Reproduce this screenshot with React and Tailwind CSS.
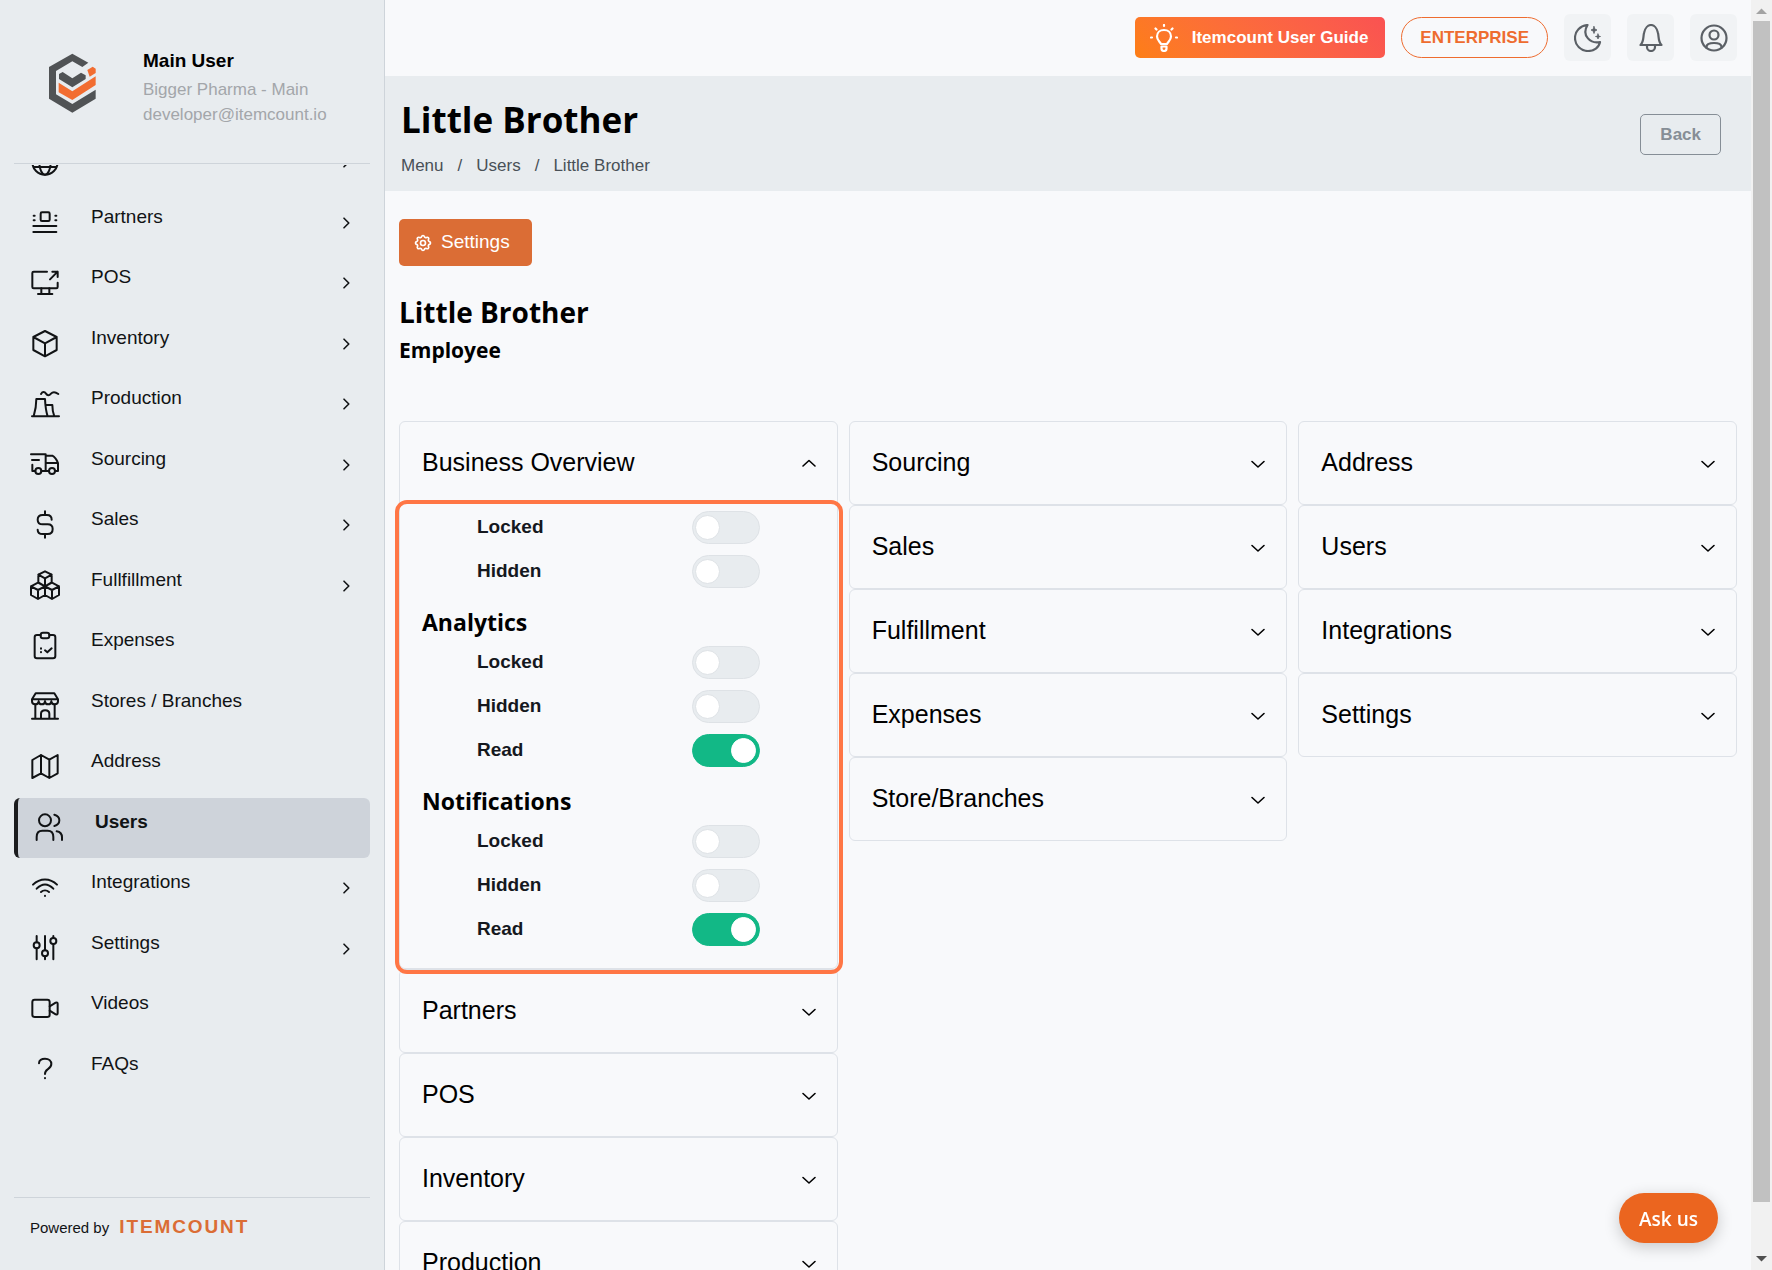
import { useState } from "react";
import { TbSettings } from "react-icons/tb";

/* ---------- icons ---------- */

const glyphs = {
  globe: (
    <>
      <circle cx="48" cy="48" r="38" />
      <ellipse cx="48" cy="48" rx="17" ry="38" />
      <path d="M14 33H82M14 63H82" />
    </>
  ),
  partners: (
    <>
      <rect x="35" y="16" width="27" height="26" rx="4" />
      <path d="M14 26H17M14 40H17M79 26H82M79 40H82M13 57H82M13 75H82" />
    </>
  ),
  pos: (
    <>
      <path d="M54 14H14Q10 14 10 18V60Q10 64 14 64H82Q86 64 86 60V47" />
      <path d="M63 37L86 14M70 14H86V30M37 64V81M61 64V81M27 81H70" />
    </>
  ),
  inventory: <path d="M48 9L13 27V66L48 85L83 66V27ZM13 27L48 46L83 27M48 46V85" />,
  production: (
    <>
      <path d="M9 85H90M14 85C19 68 22 52 22 33H48C49 55 51 70 56 85M51 51H70C70 64 72 75 76 85" />
      <path d="M36 18C41 10 47 11 51 17S60 24 66 17S80 12 88 18" />
    </>
  ),
  sourcing: (
    <>
      <path d="M6 16H50V66M9 33H30M10 47V66H19M37 66H60M50 20H70C78 24 83 32 87 42V66H79M50 42H87" />
      <circle cx="28" cy="66" r="9" />
      <circle cx="69" cy="66" r="9" />
    </>
  ),
  sales: (
    <path d="M48 7V18M48 75V86M68 32C68 23 63 18 54 18H41C31 18 26 24 26 32C26 41 32 46 41 46H56C66 46 71 52 71 60C71 69 66 75 56 75H41C31 75 26 69 26 62" />
  ),
  fulfillment: (
    <path d="M48 4L28 14V37L48 49L68 37V14ZM28 14L48 25L68 14M48 25V49M27 38L6 49V75L27 87L48 75V49ZM6 49L27 60L48 49M27 60V87M69 38L48 49V75L69 87L90 75V49ZM48 49L69 60L90 49M69 60V87" />
  ),
  expenses: (
    <>
      <path d="M35 15H24Q17 15 17 22V78Q17 85 24 85H72Q79 85 79 78V22Q79 15 72 15H61" />
      <rect x="35" y="8" width="26" height="17" rx="7" />
      <path d="M36 55V56M36 66V67M48 61L55 67L68 55" />
    </>
  ),
  stores: (
    <>
      <path d="M20 7H76L87 25V31C87 43 68 43 67 31C66 43 49 43 48 31C47 43 30 43 29 31C28 43 9 43 9 31V25ZM9 25H87" />
      <path d="M19 41V83M77 41V83M9 83H87M36 83V68C36 54 61 54 61 68V83" />
    </>
  ),
  address: <path d="M10 27L36 12L61 26L86 12V67L61 81L36 67L10 81ZM36 12V67M61 26V81" />,
  users: (
    <>
      <circle cx="36" cy="25" r="18" />
      <path d="M64 8C84 13 84 37 64 42M11 84V75C11 62 18 56 28 56H44C56 56 61 63 61 75V84M71 58C82 60 87 66 87 76V84" />
    </>
  ),
  integrations: (
    <path d="M12 38C33 17 63 17 84 38M23 50C39 33 57 33 73 50M36 60C43 54 53 54 60 60M48 71V72" />
  ),
  settings: (
    <>
      <path d="M23 9V28M23 46V79M48 9V52M48 70V79M73 9V15M73 33V79" />
      <circle cx="23" cy="37" r="9" />
      <circle cx="48" cy="61" r="9" />
      <circle cx="73" cy="24" r="9" />
    </>
  ),
  videos: (
    <>
      <rect x="10" y="20" width="52" height="52" rx="7" />
      <path d="M62 40L80 29Q86 27 86 32V61Q86 66 80 64L62 53" />
    </>
  ),
  faqs: <path d="M30 28C30 19 38 14 48 14C60 14 67 21 67 30C67 38 62 42 56 46C50 50 48 54 48 60M48 72V73" />,
};

function NavIcon({ name }) {
  return (
    <svg
      viewBox="0 0 96 96"
      className="size-8 shrink-0"
      fill="none"
      stroke="currentColor"
      strokeWidth="6"
      strokeLinecap="round"
      strokeLinejoin="round"
      aria-hidden="true"
    >
      {glyphs[name]}
    </svg>
  );
}

function LineIcon({ children, className }) {
  return (
    <svg
      viewBox="0 0 28 28"
      className={className}
      fill="none"
      stroke="currentColor"
      strokeWidth="2.2"
      strokeLinecap="round"
      strokeLinejoin="round"
      aria-hidden="true"
    >
      {children}
    </svg>
  );
}

function Logo() {
  return (
    <svg viewBox="140 155 150 186" className="mt-0.5 h-[62px] w-[50px] shrink-0" aria-hidden="true">
      <path
        fill="#505355"
        d="M216 160L264 187L246 200L216 183L167 212V282L216 311L286 268V295L216 337L146 295V200Z"
      />
      <path fill="#505355" d="M176 221L187 215L216 234L242 217L256 225V236L216 261L176 236Z" />
      <path fill="#f26d31" d="M175 247L216 273L286 228V254L216 299L175 276Z" />
      <path fill="#f26d31" d="M261 209L277 199L286 205V218L268 229Z" />
    </svg>
  );
}

function ChevronRight() {
  return (
    <svg viewBox="0 0 8 14" className="h-3.5 w-2" fill="none" stroke="currentColor" strokeWidth="1.6" aria-hidden="true">
      <path d="M2 2.200L6.800 7L2 11.800" strokeLinecap="round" strokeLinejoin="round" />
    </svg>
  );
}

function ChevronDown({ open }) {
  return (
    <svg
      viewBox="0 0 16 10"
      className={open ? "h-2.5 w-4" : "mt-0.5 h-2.5 w-4"}
      fill="none"
      stroke="currentColor"
      strokeWidth="1.6"
      aria-hidden="true"
    >
      <path d={open ? "M2 8L8 2.500L14 8" : "M2 2.500L8 8L14 2.500"} strokeLinecap="round" strokeLinejoin="round" />
    </svg>
  );
}

/* ---------- sidebar ---------- */

const navItems = [
  { label: "", icon: "globe", more: true },
  { label: "Partners", icon: "partners", more: true },
  { label: "POS", icon: "pos", more: true },
  { label: "Inventory", icon: "inventory", more: true },
  { label: "Production", icon: "production", more: true },
  { label: "Sourcing", icon: "sourcing", more: true },
  { label: "Sales", icon: "sales", more: true },
  { label: "Fullfillment", icon: "fulfillment", more: true },
  { label: "Expenses", icon: "expenses" },
  { label: "Stores / Branches", icon: "stores" },
  { label: "Address", icon: "address" },
  { label: "Users", icon: "users", active: true },
  { label: "Integrations", icon: "integrations", more: true },
  { label: "Settings", icon: "settings", more: true },
  { label: "Videos", icon: "videos" },
  { label: "FAQs", icon: "faqs" },
];

function NavItem({ item }) {
  const base = "flex items-center rounded-md pl-[15px] pr-5 text-[#111315] ";
  const look = item.active ? "border-l-4 border-[#1b1c1e] bg-[#ced3da] font-bold" : "";
  return (
    <li className="flex flex-col">
      <a
        href="#"
        className={base + "flex-1 " + look}
        aria-label={item.label || "Overview"}
        aria-current={item.active ? "page" : undefined}
      >
        <NavIcon name={item.icon} />
        <span className="ml-[30px] flex-1 pb-3 text-[19px] leading-6">{item.label}</span>
        {item.more && <ChevronRight />}
      </a>
    </li>
  );
}

function Sidebar() {
  return (
    <aside className="flex w-[385px] shrink-0 flex-col border-r border-[#ced4da] bg-[#e8ecef] px-3.5">
      <header className="flex h-[164px] shrink-0 items-center border-b border-[#ced4da] pl-[33px]">
        <Logo />
        <div className="ml-[46px] pt-2.5">
          <p className="mb-0.5 text-[19px] leading-7 font-bold text-black">Main User</p>
          <p className="text-[17px] leading-[25px] text-[#a3a6aa]">Bigger Pharma - Main</p>
          <p className="text-[17px] leading-[25px] text-[#a3a6aa]">developer@itemcount.io</p>
        </div>
      </header>
      <nav className="mt-px min-h-0 flex-1 overflow-hidden" aria-label="Main">
        <ul className="-mt-[33px] grid min-h-[968px] auto-rows-fr">
          {navItems.map((item) => (
            <NavItem key={item.icon} item={item} />
          ))}
        </ul>
      </nav>
      <footer className="flex h-[73px] shrink-0 items-baseline gap-2.5 border-t border-[#ced4da] pt-[15px] pl-4">
        <span className="text-[15px] leading-7 text-[#111315]">Powered by</span>
        <span className="text-[19px] leading-7 font-bold tracking-widest text-[#db6d35]">ITEMCOUNT</span>
      </footer>
    </aside>
  );
}

/* ---------- main area ---------- */

function IconButton({ label, children }) {
  return (
    <button
      type="button"
      aria-label={label}
      className="flex size-[47px] items-center justify-center rounded-md bg-[#f1f3f5] text-[#5b6066]"
    >
      <LineIcon className="size-7">{children}</LineIcon>
    </button>
  );
}

function TopBar() {
  return (
    <div className="flex h-[76px] shrink-0 items-center justify-end gap-4 pr-3.5 pb-px">
      <a
        href="#"
        className="flex h-[41px] items-center gap-3.5 rounded-[5px] bg-linear-45 from-[#fd7e14] to-[#fa5252] pr-[17px] pl-[15px] text-[17px] font-bold text-white"
      >
        <LineIcon className="size-7">
          <path d="M11 20C10 18 7 16 7 12.500C7 8.500 10 6 14 6S21 8.500 21 12.500C21 16 18 18 17 20ZM11.500 22.500H16.500V24.500A2.500 2.500 0 0 1 11.500 24.500Z" />
          <path d="M14 1V2M5.500 4.500L6.500 5.500M22.500 4.500L21.500 5.500M1 13.500H2M26 13.500H27" />
        </LineIcon>
        Itemcount User Guide
      </a>
      <span className="flex h-[41px] items-center rounded-full border border-[#ee6c2f] px-[18px] text-[17px] font-bold text-[#ee6c2f]">
        ENTERPRISE
      </span>
      <IconButton label="Toggle dark mode">
        <path d="M13.500 1C6 2 1 7 1 14C1 21.500 7 27 14 27C20 27 25 23.500 26 18C17 20 7 12 13.500 1Z" />
        <path d="M20 2.500L20.800 5L23 6L20.800 7L20 9.500L19.200 7L17 6L19.200 5Z" fill="currentColor" strokeWidth="0.800" />
        <path d="M24 10L24.600 12L26.500 12.500L24.600 13L24 15L23.400 13L21.500 12.500L23.400 12Z" fill="currentColor" strokeWidth="0.800" />
      </IconButton>
      <IconButton label="Notifications">
        <path d="M3.500 21H24.500C21 17.500 22 13 21 9C20 4 17 1 14 1S8 4 7 9C6 13 7 17.500 3.500 21Z" />
        <path d="M10 21V23A4 4 0 0 0 18 23V21" />
      </IconButton>
      <IconButton label="Account">
        <circle cx="14" cy="14" r="12.500" />
        <circle cx="14" cy="11" r="4.500" />
        <path d="M6.500 24V23C6.500 20 9 19 14 19S21.500 20 21.500 23V24" />
      </IconButton>
    </div>
  );
}

const displayFont = "font-['Open_Sans','Noto_Sans',sans-serif]";

function PageHeader() {
  return (
    <header className="flex h-[115px] shrink-0 items-center justify-between bg-[#e8ecef] pt-0.5 pr-[30px] pl-4">
      <div className="pt-1">
        <h1 className={displayFont + " text-[35px] leading-[48px] font-bold text-black"}>Little Brother</h1>
        <nav aria-label="Breadcrumb" className="pt-2.5">
          <ol className="flex items-center gap-3.5 text-[17px] leading-6 text-[#495057]">
            <li><a href="#">Menu</a></li>
            <li aria-hidden="true">/</li>
            <li><a href="#">Users</a></li>
            <li aria-hidden="true">/</li>
            <li aria-current="page">Little Brother</li>
          </ol>
        </nav>
      </div>
      <button
        type="button"
        className="h-[41px] rounded-[5px] border border-[#868e96] px-[19px] text-[17px] font-bold text-[#868e96]"
      >
        Back
      </button>
    </header>
  );
}

function Toggle({ id, label, initial }) {
  const [on, setOn] = useState(initial);
  return (
    <div className="flex h-11 items-center pl-[77px]">
      <label htmlFor={id} className="w-[215px] text-[19px] leading-6 font-bold text-[#15181e]">
        {label}
      </label>
      <input
        id={id}
        type="checkbox"
        role="switch"
        checked={on}
        onChange={(e) => setOn(e.target.checked)}
        className="flex h-[33px] w-[68px] appearance-none items-center rounded-full border border-[#dee2e6] bg-[#e8ecef] px-0.5 before:size-[25px] before:rounded-full before:border before:border-[#dee2e6] before:bg-white before:content-[''] checked:justify-end checked:border-[#12b886] checked:bg-[#12b886] checked:px-[3px] checked:before:border-white"
      />
    </div>
  );
}

function ToggleGroup({ title, rows, prefix }) {
  return (
    <section>
      {title && (
        <h3 className={displayFont + " pt-[13px] pb-px pl-[22px] text-[23px] leading-[33px] font-bold text-black"}>
          {title}
        </h3>
      )}
      {rows.map(([label, on]) => (
        <Toggle key={label} id={prefix + "-" + label} label={label} initial={on} />
      ))}
    </section>
  );
}

function PanelHeader({ title, open }) {
  return (
    <button
      type="button"
      aria-expanded={open}
      className="flex h-[82px] w-full items-center justify-between pr-5 pl-[22px] text-left text-[25px] leading-8 text-black"
    >
      <span className="pb-0.5">{title}</span>
      <ChevronDown open={open} />
    </button>
  );
}

function Panel({ title, open = false, children }) {
  return (
    <div className="rounded-md border border-[#dee2e8]">
      <PanelHeader title={title} open={open} />
      {children}
    </div>
  );
}

function PanelColumn({ titles, children }) {
  return (
    <div className="min-w-0 flex-1">
      {children}
      {titles.map((t) => (
        <Panel key={t} title={t} />
      ))}
    </div>
  );
}

function Permissions() {
  return (
    <div className="mt-[55px] flex items-start gap-[11px]">
      <PanelColumn titles={["Partners", "POS", "Inventory", "Production"]}>
        <Panel title="Business Overview" open>
          <div className="relative pt-px pb-[17px]">
            <ToggleGroup prefix="overview" rows={[["Locked", false], ["Hidden", false]]} />
            <ToggleGroup
              prefix="analytics"
              title="Analytics"
              rows={[["Locked", false], ["Hidden", false], ["Read", true]]}
            />
            <ToggleGroup
              prefix="notifications"
              title="Notifications"
              rows={[["Locked", false], ["Hidden", false], ["Read", true]]}
            />
            <div className="pointer-events-none absolute -top-[4px] -right-[6px] -bottom-[6px] -left-[5px] rounded-xl border-4 border-[#ff7645]" />
          </div>
        </Panel>
      </PanelColumn>
      <PanelColumn titles={["Sourcing", "Sales", "Fulfillment", "Expenses", "Store/Branches"]} />
      <PanelColumn titles={["Address", "Users", "Integrations", "Settings"]} />
    </div>
  );
}

function ScrollTrack() {
  return (
    <div className="flex w-[21px] shrink-0 flex-col items-center bg-[#f1f1f1]" aria-hidden="true">
      <svg viewBox="0 0 21 21" className="size-[21px]">
        <path d="M5 14H16L10.500 8.500Z" fill="#a3a3a3" />
      </svg>
      <div className="w-[17px] flex-1 bg-[#c1c1c1]" />
      <svg viewBox="0 0 21 21" className="mt-[47px] size-[21px]">
        <path d="M5 7H16L10.500 12.500Z" fill="#505050" />
      </svg>
    </div>
  );
}

export default function App() {
  return (
    <div className="flex h-screen overflow-hidden bg-[#f8f9fb] font-['Liberation_Sans',Arial,sans-serif]">
      <Sidebar />
      <div className="flex min-w-0 flex-1 flex-col overflow-hidden">
        <TopBar />
        <PageHeader />
        <main className="px-3.5 pt-7">
          <button
            type="button"
            className="flex h-[47px] items-center gap-2 rounded-[5px] bg-[#db6d35] pr-[22px] pl-3.5 text-[19px] text-white"
          >
            <TbSettings className="size-5" />
            Settings
          </button>
          <h2 className={displayFont + " mt-[26px] text-[28px] leading-[40px] font-bold text-black"}>Little Brother</h2>
          <p className={displayFont + " mt-0.5 text-[21px] leading-[32px] font-bold text-black"}>Employee</p>
          <Permissions />
        </main>
      </div>
      <ScrollTrack />
      <button
        type="button"
        className={
          displayFont +
          " fixed right-[54px] bottom-[27px] h-[50px] rounded-full bg-[#eb651f] px-5 pt-0.5 text-[19px] font-semibold text-white shadow-[0_4px_16px_rgba(0,0,0,0.2)]"
        }
      >
        Ask us
      </button>
    </div>
  );
}
